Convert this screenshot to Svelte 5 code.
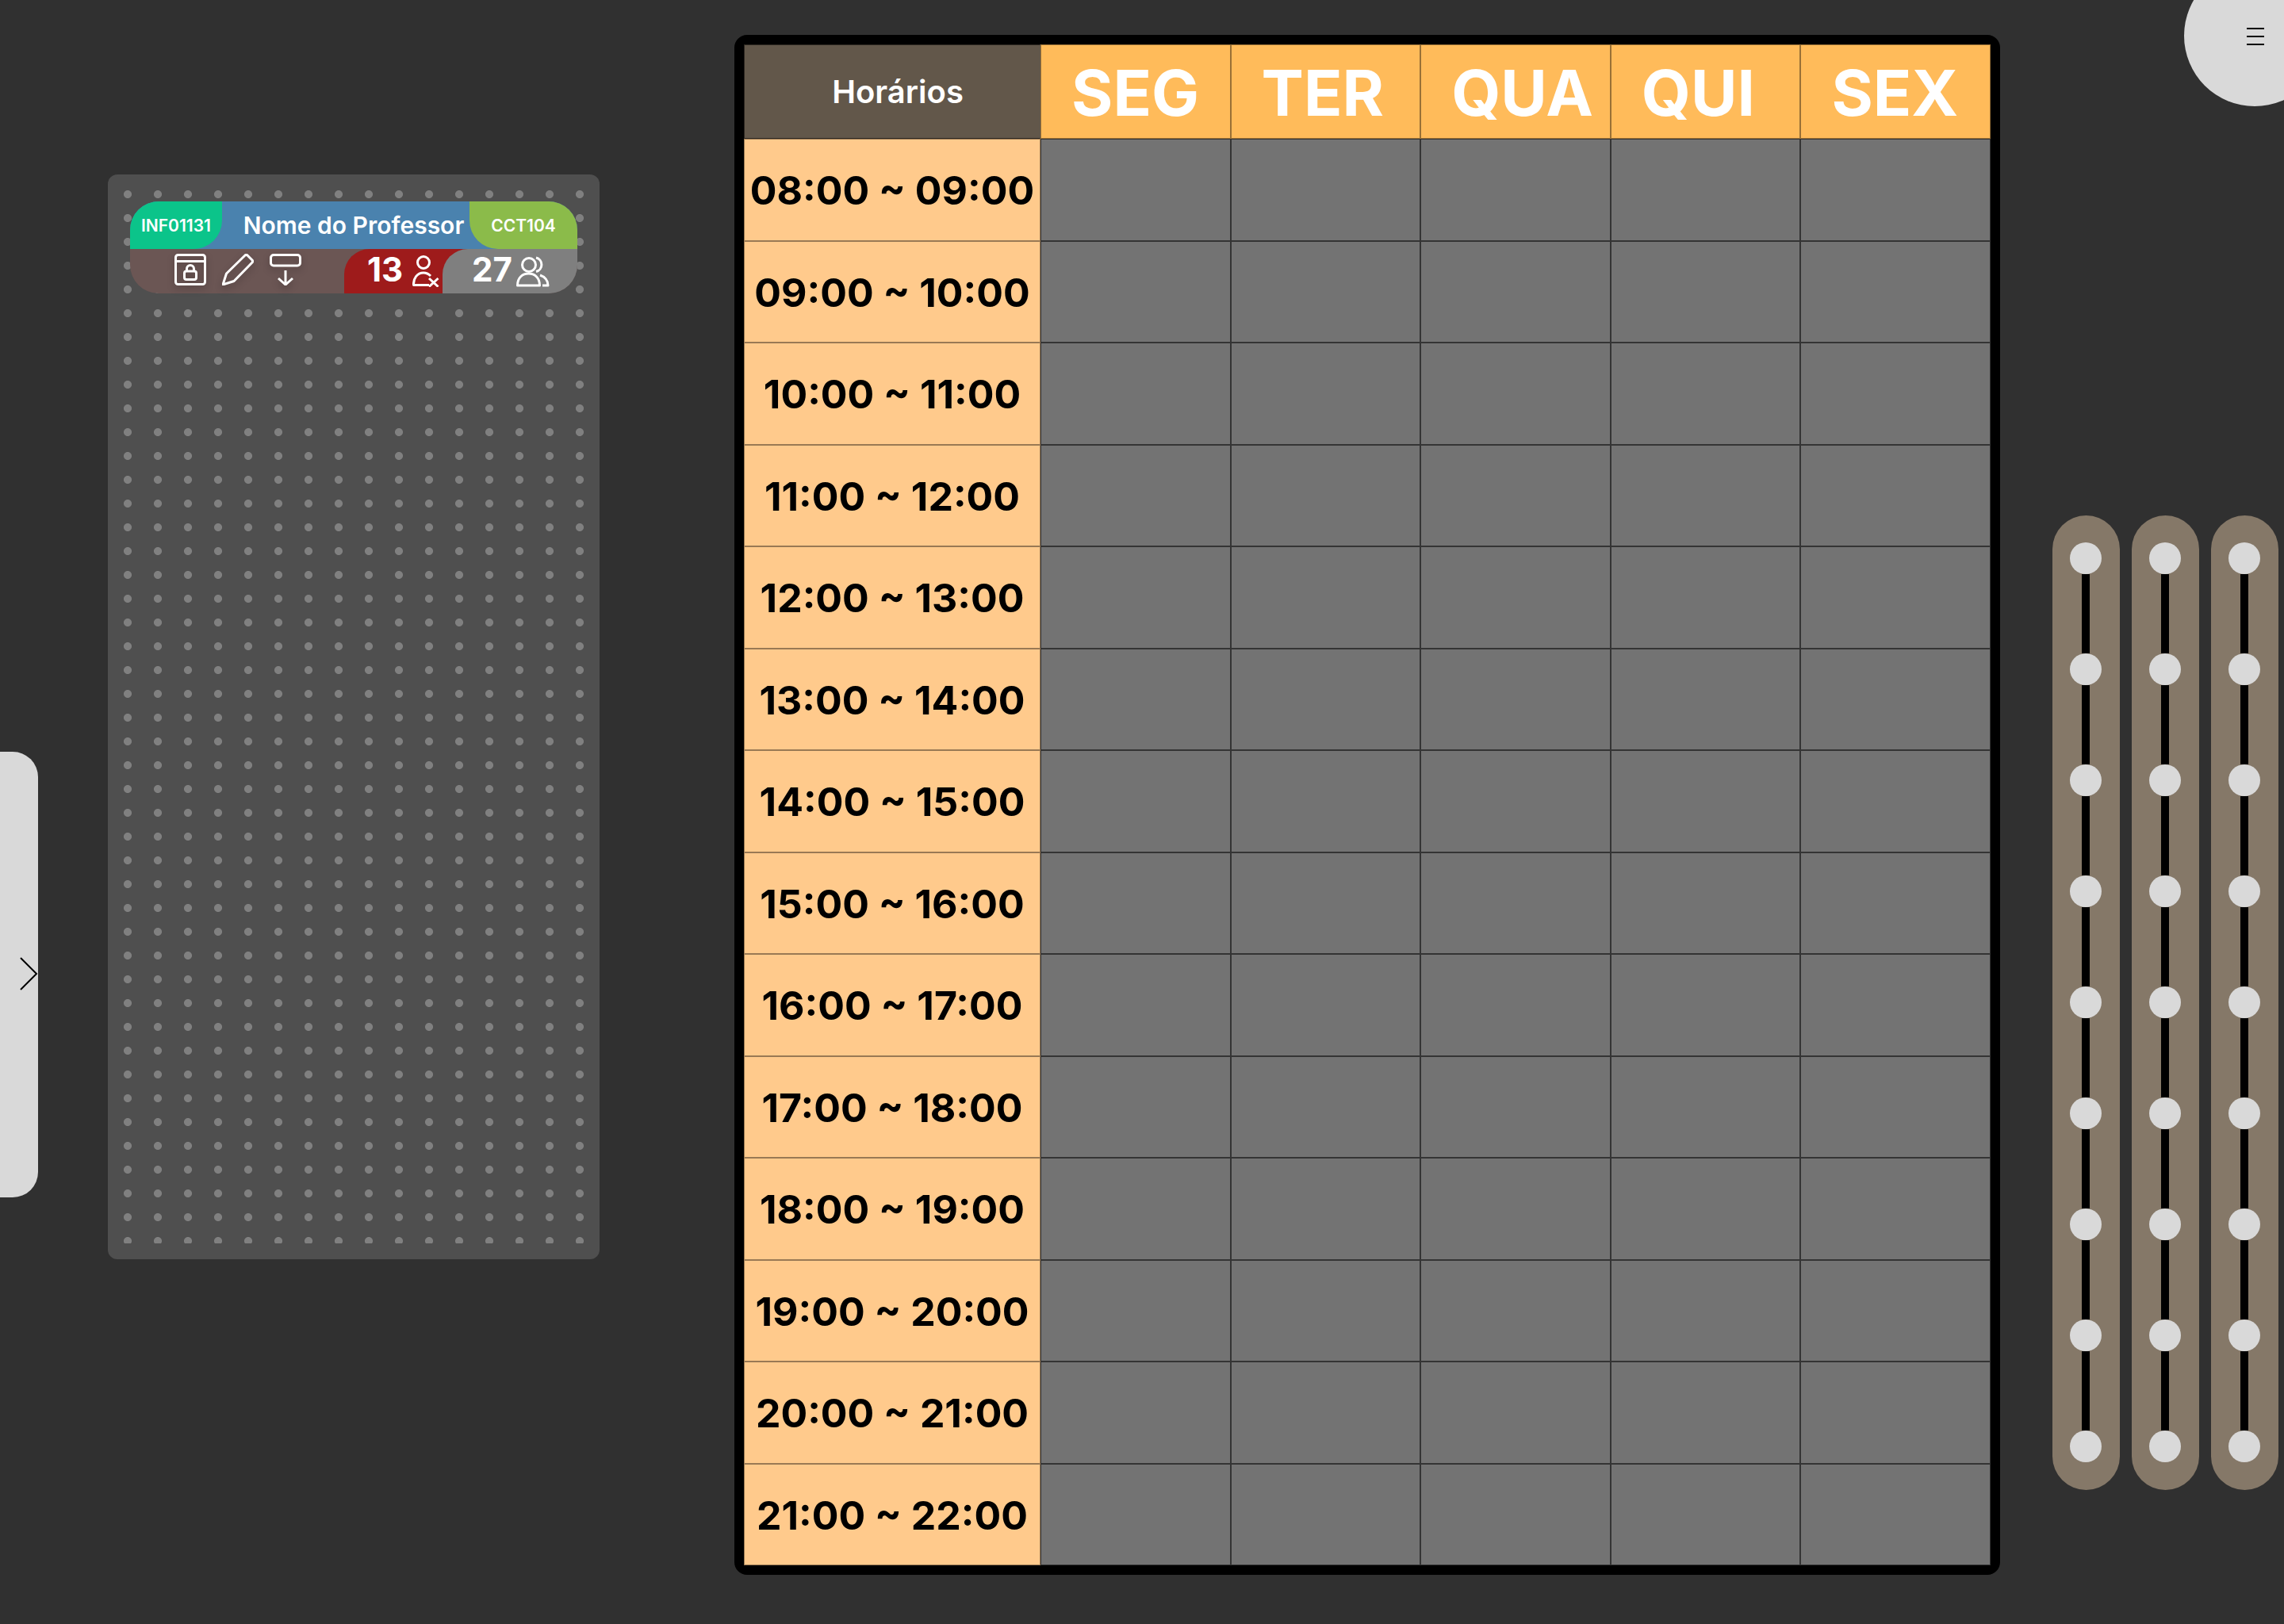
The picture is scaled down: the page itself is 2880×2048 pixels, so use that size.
<script>
	const days = ["SEG", "TER", "QUA", "QUI", "SEX"];
	const hours = [
		"08:00 ~ 09:00", "09:00 ~ 10:00", "10:00 ~ 11:00", "11:00 ~ 12:00", "12:00 ~ 13:00",
		"13:00 ~ 14:00", "14:00 ~ 15:00", "15:00 ~ 16:00", "16:00 ~ 17:00", "17:00 ~ 18:00",
		"18:00 ~ 19:00", "19:00 ~ 20:00", "20:00 ~ 21:00", "21:00 ~ 22:00"
	];
	const rails = [0, 1, 2];
	const stops = [0, 1, 2, 3, 4, 5, 6, 7];
</script>

<div class="page">
	<div class="drawer">
		<svg class="chevron" viewBox="0 0 24 42" width="24" height="42">
			<path d="M2 1 L22 21 L2 41" fill="none" stroke="#000" stroke-width="2" />
		</svg>
	</div>

	<div class="menu">
		<span></span><span></span><span></span>
	</div>

	<section class="panel">
		<div class="dots">
			<article class="card">
				<div class="card-top">
					<span class="code">INF01131</span>
					<span class="teacher">Nome do Professor</span>
					<span class="room">CCT104</span>
				</div>
				<div class="card-bottom">
					<div class="tools">
						<svg viewBox="0 0 40 40" width="40" height="40">
							<rect x="1.5" y="1.5" width="37" height="37" rx="3" />
							<path d="M1.5 9.5 H38.5" />
							<rect x="12.5" y="22" width="15" height="10.5" rx="2.5" />
							<path d="M15.5 22 V19 a4.5 4.5 0 0 1 9 0 V22" />
						</svg>
						<svg viewBox="0 0 40 40" width="40" height="40">
							<path d="M1 39 L5.5 25 L29 2 Q30.5 0.8 32 2 L38 8 Q39.2 9.5 38 11 L15 34.5 Z" />
						</svg>
						<svg viewBox="0 0 40 40" width="40" height="40">
							<rect x="1.5" y="1.5" width="37" height="13.5" rx="3.5" />
							<path d="M20 21 V38.5 M11 31 L20 39 L29 31" />
						</svg>
					</div>
					<div class="stat absent">
						<b>13</b>
						<svg viewBox="0 0 34 40" width="34" height="40">
							<circle cx="14" cy="9" r="7.5" />
							<path d="M21 37.5 H1.5 C1 29 6 22 14 22 C18 22 21 24 23 26" />
							<path d="M21 29 L32.5 39.5 M32.5 29 L21 39.5" stroke-width="3.5" />
						</svg>
					</div>
					<div class="stat total">
						<b>27</b>
						<svg viewBox="0 0 42 40" width="42" height="40">
							<circle cx="16" cy="12" r="8.5" />
							<path d="M25 3 a9 9 0 0 1 0 17.5" />
							<path d="M1.5 38 C1.5 28 8 23 15.5 23 C23 23 29.5 28 29.5 38 Z" />
							<path d="M30 25 C36 27 40 32 40 38 H33" />
						</svg>
					</div>
				</div>
			</article>
		</div>
	</section>

	<section class="table">
		<div class="cell corner">Horários</div>
		{#each days as day}
			<div class="cell day">{day}</div>
		{/each}
		{#each hours as hour}
			<div class="cell hour">{hour}</div>
			{#each days as day}
				<div class="cell slot"></div>
			{/each}
		{/each}
	</section>

	<aside class="rails">
		{#each rails as rail}
			<div class="rail">
				<span class="knob"></span>
				{#each stops as stop}
					<span class="bar"></span>
					<span class="knob"></span>
				{/each}
			</div>
		{/each}
	</aside>
</div>

<style>
	:global(body) {
		margin: 0;
		background: #303030;
		overflow: hidden;
	}
	.page {
		position: relative;
		display: flex;
		align-items: flex-start;
		box-sizing: border-box;
		width: 2880px;
		height: 2048px;
		padding-left: 136px;
		overflow: hidden;
		background: #303030;
		font-family: Inter, "Liberation Sans", sans-serif;
	}

	.drawer {
		position: absolute;
		left: 0;
		top: 948px;
		width: 48px;
		height: 562px;
		background: #d9d9d9;
		border-radius: 0 32px 32px 0;
	}
	.chevron {
		position: absolute;
		left: 24px;
		top: 259px;
	}

	.menu {
		position: absolute;
		left: 2754px;
		top: -44px;
		box-sizing: border-box;
		width: 178px;
		height: 178px;
		padding: 79px 0 0 79px;
		border-radius: 50%;
		background: #d9d9d9;
		display: flex;
		flex-direction: column;
		gap: 8px;
	}
	.menu span {
		width: 22px;
		height: 2px;
		background: #000;
	}

	.panel {
		box-sizing: border-box;
		flex: none;
		width: 620px;
		height: 1368px;
		margin-top: 220px;
		padding: 10px 6px 20px;
		background: #4f4f4f;
		border-radius: 12px;
	}
	.dots {
		height: 100%;
		padding: 24px 22px 0;
		box-sizing: border-box;
		background-image: radial-gradient(circle at center, #808080 4.6px, transparent 5.4px);
		background-size: 38px 30px;
	}

	.card {
		width: 564px;
		color: #fff;
	}
	.card-top {
		display: flex;
		align-items: center;
		height: 60px;
		background: #4a82ae;
		border-radius: 36px 36px 0 0;
	}
	.code,
	.room {
		flex: none;
		display: flex;
		align-items: center;
		justify-content: center;
		height: 60px;
		font-size: 21px;
		font-weight: 600;
	}
	.code {
		width: 116px;
		background: #0bc48a;
		border-radius: 36px 0 36px 0;
	}
	.room {
		width: 136px;
		background: #8bbb4a;
		border-radius: 0 36px 0 36px;
	}
	.teacher {
		flex: 1;
		padding-left: 20px;
		text-align: center;
		font-size: 30px;
		font-weight: 600;
		white-space: nowrap;
	}
	.card-bottom {
		display: flex;
		height: 56px;
		background: #6b5654;
		border-radius: 0 0 36px 36px;
	}
	.tools {
		display: flex;
		gap: 20px;
		width: 270px;
		padding: 6px 0 0 56px;
		box-sizing: border-box;
	}
	.tools svg {
		filter: drop-shadow(0 4px 4px rgba(0, 0, 0, 0.25));
	}
	svg :global(rect),
	svg :global(circle),
	.card path {
		fill: none;
		stroke: #fff;
		stroke-width: 3;
		stroke-linejoin: round;
	}
	.stat {
		display: flex;
		align-items: center;
		box-sizing: border-box;
		height: 56px;
	}
	.stat b {
		margin-top: -6px;
		font-size: 42px;
		font-weight: 700;
	}
	.absent {
		width: 156px;
		padding-left: 29px;
		gap: 12px;
		background: #9e1b1b;
		border-radius: 32px 0 0 0;
	}
	.total {
		width: 170px;
		margin-left: -32px;
		padding-left: 37px;
		gap: 5px;
		background: #7f7f7f;
		border-radius: 32px 0 36px 0;
	}

	.table {
		box-sizing: border-box;
		flex: none;
		display: grid;
		grid-template-columns: 374px repeat(5, 1fr);
		grid-template-rows: 119px repeat(14, 1fr);
		width: 1596px;
		height: 1942px;
		margin: 44px 0 0 170px;
		border: 12px solid #000;
		border-radius: 16px;
		background: #000;
	}
	.cell {
		box-sizing: border-box;
		display: flex;
		align-items: center;
		min-width: 0;
		border: 1px solid rgba(0, 0, 0, 0.55);
	}
	.corner {
		justify-content: center;
		padding-left: 14px;
		background: #62574a;
		border-right-color: transparent;
		color: #fff;
		font-size: 40px;
		font-weight: 600;
	}
	.day {
		padding: 2px 0 0 38px;
		background: #ffbb5a;
		border-color: rgba(0, 0, 0, 0.4);
		color: #fff;
		font-size: 80px;
		font-weight: 700;
		white-space: nowrap;
	}
	.hour {
		justify-content: center;
		padding-top: 2px;
		background: #ffca8c;
		border-color: rgba(0, 0, 0, 0.4);
		color: #000;
		font-size: 50px;
		font-weight: 700;
		white-space: nowrap;
	}
	.slot {
		background: #737373;
	}

	.rails {
		flex: none;
		display: flex;
		gap: 15px;
		margin: 650px 0 0 66px;
	}
	.rail {
		box-sizing: border-box;
		display: flex;
		flex-direction: column;
		align-items: center;
		width: 85px;
		height: 1229px;
		padding: 34px 1px 0 0;
		background: #857868;
		border-radius: 43px;
	}
	.knob {
		flex: none;
		width: 40px;
		height: 40px;
		border-radius: 50%;
		background: #d9d9d9;
	}
	.bar {
		flex: none;
		width: 10px;
		height: 100px;
		background: #000;
	}
</style>
